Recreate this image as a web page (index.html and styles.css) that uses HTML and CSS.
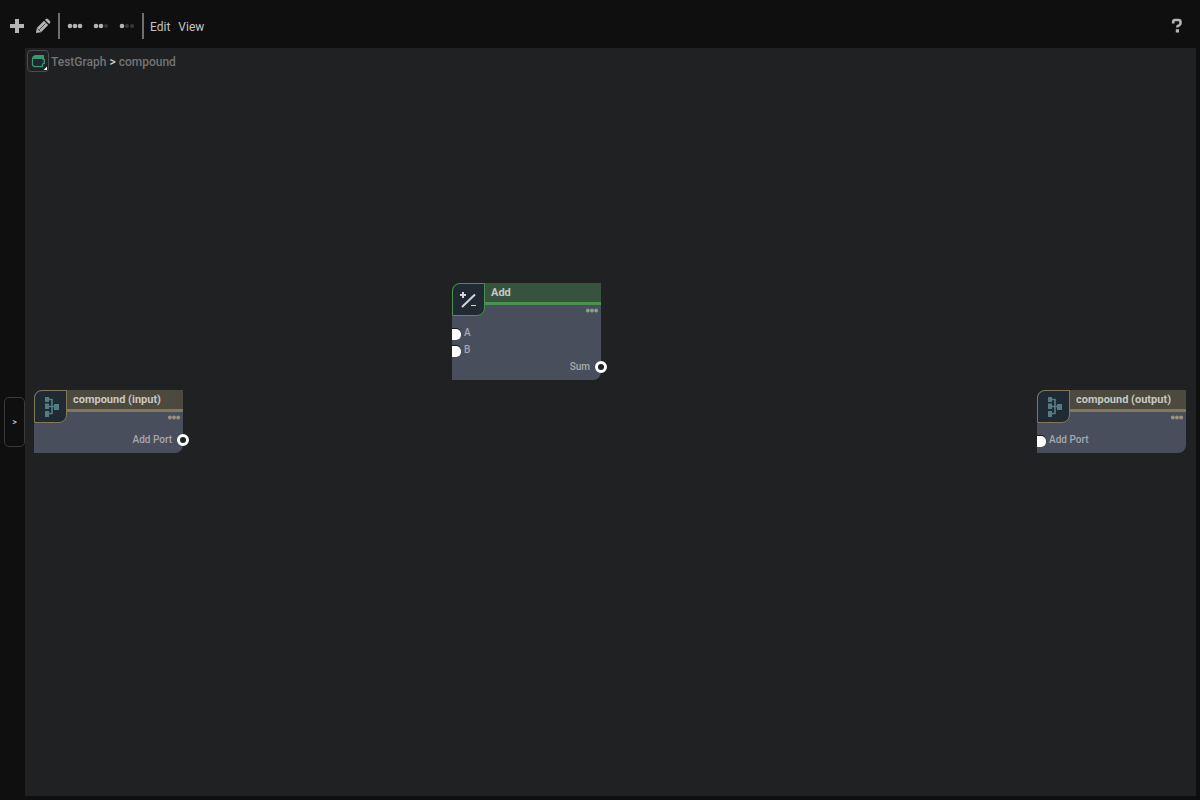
FILE: index.html
```html
<!DOCTYPE html>
<html lang="en">
<head>
<meta charset="utf-8">
<title>TestGraph</title>
<link rel="stylesheet" href="styles.css">
</head>
<body>
<svg class="defs" aria-hidden="true">
  <symbol id="dots" viewBox="0 0 16 6"><circle cx="3" cy="3" r="2.3"/><circle cx="8" cy="3" r="2.3"/><circle cx="13" cy="3" r="2.3"/></symbol>
  <symbol id="tree" viewBox="1 1 31 31"><path d="M11 7h4v5h-4zM11 13.500h4v5.500h-4zM11 21h4v6h-4zM20 14h5v6h-5z"/><path d="M15 9.500h3v14h-3M15 16.500h6" fill="none" stroke="currentColor" stroke-width="1.600"/></symbol>
</svg>
<header class="toolbar">
  <button class="tool" aria-label="Add node"><svg width="16" height="16" viewBox="0 0 16 16"><path d="M6 1h4v5h5v4h-5v5H6v-5H1V6h5z"/></svg></button>
  <button class="tool" aria-label="Edit node"><svg width="16" height="16" viewBox="0 0 16 16"><path d="M1 15l.8-5L9 2.800l4.200 4.200L6 14.200zM10 1.900l.9-.9q1-.8 2 0l2.100 2.100q.8 1 0 2l-.9.900z"/><path d="M4.500 11.500l6-6M2.500 10.500l3 3" stroke="#3a3a3a" stroke-width=".9" fill="none"/></svg></button>
  <span class="rule"></span>
  <button class="tool" aria-label="Expand all"><svg width="16" height="6"><use href="#dots"/></svg></button>
  <button class="tool" aria-label="Connected ports"><svg width="16" height="6" viewBox="0 0 16 6"><circle cx="3" cy="3" r="2.300"/><circle cx="8" cy="3" r="2.300"/><circle class="off" cx="13" cy="3" r="2"/></svg></button>
  <button class="tool" aria-label="Collapse all"><svg width="16" height="6" viewBox="0 0 16 6"><circle cx="3" cy="3" r="2.300"/><circle class="off" cx="8" cy="3" r="2"/><circle class="off" cx="13" cy="3" r="2"/></svg></button>
  <span class="rule"></span>
  <div class="menus"><button class="menu">Edit</button><button class="menu">View</button></div>
  <button class="help" aria-label="Help"><svg width="12" height="16" viewBox="0 0 12 16"><path d="M2.200 5.500V4q0-2 2-2h3.300q2 0 2 2v1.300q0 1-1 1.700L6.500 8.300v1.200" fill="none" stroke="currentColor" stroke-width="2.600"/><path d="M4.800 11.200h3.200v3.300H4.800z"/></svg></button>
</header>
<div class="work">
  <aside class="side"><button class="expand" aria-label="Expand panel">&gt;</button></aside>
  <main class="canvas">
    <nav class="crumbs" aria-label="Breadcrumb">
      <button class="graph" aria-label="Graph menu"><svg width="20" height="20" viewBox="1 1 20 20"><path d="M5 8q1-3 4-3h8v4H5z" fill="#38996f"/><path d="M5.500 8.500v6.500l1.500 1.500h8.500v-3M15.500 9.500h1.800v4h-1.800" fill="none" stroke="#38996f" stroke-width="1.300"/><path d="M6.500 9.500h6v1h3v3h-2v2h-6l-1-1z" fill="#1b2833"/><path d="M20 16.500V20h-3.500z" fill="#fff"/></svg></button>
      <div class="trail"><a href="#TestGraph">TestGraph</a><span class="sep">&gt;</span><a href="#compound">compound</a></div>
    </nav>
    <section class="node add">
      <span class="icon"><svg width="31" height="31" viewBox="1 1 31 31"><path d="M11 9v6M8 12h6" stroke="#d6d6d6" stroke-width="2"/><path d="M10 24L23 11.500" stroke="#d6d6d6" stroke-width="2"/><path d="M19 22.500h5" stroke="#d6d6d6"/></svg></span>
      <h2>Add</h2>
      <button class="more" aria-label="Add options"><svg width="14" height="5"><use href="#dots"/></svg></button>
      <ul class="ports"><li class="in">A</li><li class="in">B</li><li class="out">Sum</li></ul>
    </section>
    <section class="node input">
      <span class="icon"><svg width="31" height="31"><use href="#tree"/></svg></span>
      <h2>compound (input)</h2>
      <button class="more" aria-label="Input options"><svg width="14" height="5"><use href="#dots"/></svg></button>
      <ul class="ports"><li class="out">Add Port</li></ul>
    </section>
    <section class="node output">
      <span class="icon"><svg width="31" height="31"><use href="#tree"/></svg></span>
      <h2>compound (output)</h2>
      <button class="more" aria-label="Output options"><svg width="14" height="5"><use href="#dots"/></svg></button>
      <ul class="ports"><li class="in">Add Port</li></ul>
    </section>
  </main>
</div>
</body>
</html>
```
FILE: styles.css
```css
*, *::before, *::after { box-sizing: border-box; }
body {
  margin: 0;
  min-height: 100vh;
  display: flex;
  flex-direction: column;
  background: #0f0f0f;
  color: #b4b4b4;
  font: 12px/16px Roboto, sans-serif;
}
button {
  padding: 0;
  border: 0;
  background: none;
  color: inherit;
  font: inherit;
}
svg { display: block; fill: currentColor; }
.defs { position: absolute; width: 0; height: 0; }
.toolbar {
  height: 48px;
  padding: 4px 17px 0 4px;
  display: flex;
  align-items: center;
}
.tool { width: 26px; display: grid; place-items: center; }
.off { fill: #383838; }
.rule { width: 2px; height: 26px; margin: 0 2px; background: #6f6f6f; }
.menus { display: flex; gap: 8px; padding: 2px 4px 0; }
.menu { color: #c4c4c4; }
.help { margin-left: auto; }
.work { flex: 1; display: flex; padding: 0 4px 4px 0; }
.side {
  width: 25px;
  padding-left: 4px;
  display: flex;
  align-items: center;
}
.expand {
  width: 21px;
  height: 50px;
  border: 1px solid #3a3a3a;
  border-radius: 5px;
  font-size: 9px;
  font-weight: 500;
  color: #ccc;
}
.canvas { flex: 1; position: relative; background: #202123; }
.crumbs {
  display: flex;
  align-items: center;
  padding: 2px;
  font-weight: 500;
}
.trail { display: flex; gap: 3px; padding-top: 2px; }
.trail a { color: #737475; text-decoration: none; }
.graph {
  width: 22px;
  height: 22px;
  margin-right: 2px;
  border: 1px solid #4b4c4e;
  border-radius: 4px;
  display: grid;
  place-items: center;
}
.sep { color: #ccc; }
.node {
  position: absolute;
  width: 149px;
  padding-bottom: 4px;
  border-radius: 8px 0 8px 0;
  background: #494e5c;
}
.node.add { left: 427px; top: 235px; --line: #4a904f; --head: #36543d; --dots: #84a08a; }
.node.input { left: 9px; top: 342px; --line: #83795a; --head: #4c493e; --dots: #9a927c; }
.node.output { right: 10px; top: 342px; --line: #83795a; --head: #4c493e; --dots: #9a927c; }
.icon {
  position: absolute;
  left: 0;
  top: 0;
  width: 33px;
  height: 33px;
  border: 1px solid var(--line);
  border-radius: 8px 0 8px 0;
  background: #1f2a32;
  color: #557c85;
  display: grid;
  place-items: center;
}
.node h2 {
  margin: 0 0 0 33px;
  height: 22px;
  padding-left: 6px;
  border-bottom: 3px solid var(--line);
  background: var(--head);
  color: #c6c7c3;
  font-size: 11px;
  font-weight: 700;
  line-height: 19px;
}
.more {
  display: block;
  margin: 3px 2px 12px auto;
  color: var(--dots);
}
.ports {
  margin: 0;
  padding: 0;
  list-style: none;
  color: #a6a8ad;
  font-size: 10px;
  font-weight: 500;
  line-height: 16px;
}
.ports li { position: relative; height: 17px; padding: 0 11px 0 12px; }
.out { text-align: right; }
.out::after {
  content: "";
  position: absolute;
  right: -6px;
  top: 2px;
  width: 12px;
  height: 12px;
  border: 3px solid #fff;
  border-radius: 50%;
  background: #202123;
}
.in::before {
  content: "";
  position: absolute;
  left: 0;
  top: 4px;
  width: 9px;
  height: 11px;
  border-radius: 0 5px 5px 0;
  background: #fff;
  box-shadow: 0 -1px 0 #17181b;
}
```
